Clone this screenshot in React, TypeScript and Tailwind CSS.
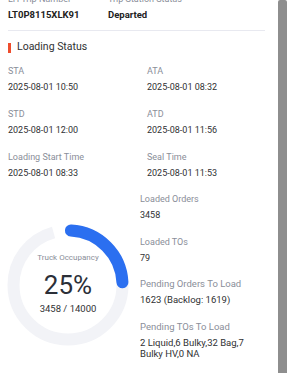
import React from "react";

const Field = ({ label, value }: { label: string; value: string }) => (
  <div>
    <div className="text-[9px] leading-[12px] text-[#8a8e99]">{label}</div>
    <div className="mt-[4px] text-[9px] leading-[12px] text-[#303133]">{value}</div>
  </div>
);

export default function App() {
  const r = 54.5;
  const c = 2 * Math.PI * r;
  const blue = c * 0.25;
  const gray = (c * 344) / 360;
  return (
    <div className="w-[287px] h-[373px] overflow-hidden flex bg-white font-['Roboto',sans-serif]">
      <div className="flex-1 overflow-hidden">
        <div className="-mt-[7px] pl-[8px] pr-[13px]">
          <div className="grid grid-cols-[100px_1fr] pb-[9px] border-b border-[#e8e9f0]">
            <div className="text-[9px] leading-[12px] text-[#8a8e99]">LH Trip Number</div>
            <div className="text-[9px] leading-[12px] text-[#8a8e99]">Trip Station Status</div>
            <div className="mt-[4px] text-[9.5px] leading-[12px] font-bold text-[#222]">LT0P8115XLK91</div>
            <div className="mt-[4px] text-[9.5px] leading-[12px] font-bold text-[#222]">Departed</div>
          </div>
          <div className="mt-[9px] flex items-center gap-[6px] h-[14px]">
            <div className="w-[3px] h-[10px] bg-[#ee4d2d] mt-[2px]" />
            <div className="text-[10.5px] leading-[14px] text-[#303133]">Loading Status</div>
          </div>
          <div className="mt-[11px] grid grid-cols-[139px_1fr] gap-y-[15px]">
            <Field label="STA" value="2025-08-01 10:50" />
            <Field label="ATA" value="2025-08-01 08:32" />
            <Field label="STD" value="2025-08-01 12:00" />
            <Field label="ATD" value="2025-08-01 11:56" />
            <Field label="Loading Start Time" value="2025-08-01 08:33" />
            <Field label="Seal Time" value="2025-08-01 11:53" />
          </div>
          <div className="mt-[14px] flex">
            <div className="w-[132px] shrink-0">
              <div className="relative w-[122px] h-[122px] -ml-[1px] mt-[31px]">
                <svg className="absolute inset-0" width="122" height="122" viewBox="0 0 122 122">
                  <g transform="rotate(-90 61 61)">
                    <circle
                      cx="61"
                      cy="61"
                      r={r}
                      fill="none"
                      stroke="#f2f3f7"
                      strokeWidth="12"
                      strokeDasharray={`${gray} ${c}`}
                    />
                    <circle
                      cx="61"
                      cy="61"
                      r={r}
                      fill="none"
                      stroke="#2b6ff0"
                      strokeWidth="12"
                      strokeLinecap="round"
                      strokeDasharray={`${blue - 6} ${c}`}
                      strokeDashoffset={-3}
                    />
                  </g>
                </svg>
                <div className="relative flex flex-col items-center pt-[29px]">
                  <div className="text-[8px] leading-[10px] text-[#8a8e99]">Truck Occupancy</div>
                  <div className="mt-[7px] text-[26px] leading-[30px] text-[#2b2f38]">25%</div>
                  <div className="mt-[3px] text-[9.5px] leading-[12px] text-[#303133]">3458 / 14000</div>
                </div>
              </div>
            </div>
            <div className="w-[124px] flex flex-col gap-y-[14.5px]">
              <Field label="Loaded Orders" value="3458" />
              <Field label="Loaded TOs" value="79" />
              <div>
                <div className="text-[9.5px] leading-[12px] text-[#8a8e99]">Pending Orders To Load</div>
                <div className="mt-[4px] text-[9.5px] leading-[12px] text-[#303133]">1623 (Backlog: 1619)</div>
              </div>
              <div>
                <div className="text-[9.5px] leading-[12px] text-[#8a8e99]">Pending TOs To Load</div>
                <div className="mt-[4px] text-[9.5px] leading-[11px] text-[#303133]">
                  2 Liquid,6 Bulky,32 Bag,7 Bulky HV,0 NA
                </div>
              </div>
            </div>
          </div>
        </div>
      </div>
      <div className="w-[9px] shrink-0 bg-[#8e8e8e] rounded-t-[2px]" />
    </div>
  );
}
